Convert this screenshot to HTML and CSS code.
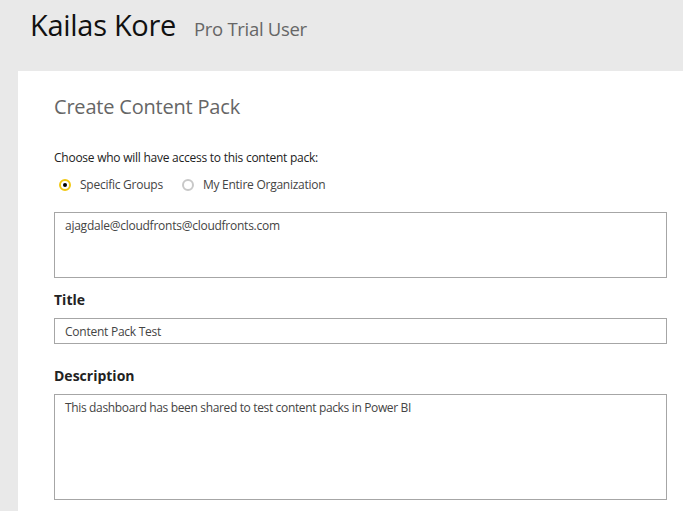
FILE: index.html
```html
<!DOCTYPE html>
<html lang="en">

<head>
    <meta charset="UTF-8">
    <meta name="viewport" content="width=device-width, initial-scale=1.0">
    <title>Create Content Pack</title>
    <link rel="stylesheet" href="styles.css">
</head>

<body>
    <header class="top-bar">
        <h1 class="user-name">Kailas Kore</h1>
        <span class="user-plan">Pro Trial User</span>
    </header>

    <main class="panel">
        <h2 class="panel-title">Create Content Pack</h2>

        <p class="access-label">Choose who will have access to this content pack:</p>
        <div class="radio-row">
            <label class="radio-option">
                <span class="radio checked"></span>
                Specific Groups
            </label>
            <label class="radio-option">
                <span class="radio"></span>
                My Entire Organization
            </label>
        </div>

        <div class="field-box email-box">ajagdale@cloudfronts@cloudfronts.com</div>

        <h3 class="field-label">Title</h3>
        <div class="field-box title-box">Content Pack Test</div>

        <h3 class="field-label desc-label">Description</h3>
        <div class="field-box desc-box">This dashboard has been shared to test content packs in Power BI</div>
    </main>
</body>

</html>
```

FILE: styles.css
```css
* {
    margin: 0;
    padding: 0;
    box-sizing: border-box;
}

body {
    font-family: "Open Sans", "Noto Sans", Arial, sans-serif;
    background-color: #e9e9e9;
    color: #222;
    height: 511px;
    overflow: hidden;
}

.top-bar {
    display: flex;
    align-items: baseline;
    padding: 5px 0 0 30px;
    height: 71px;
}

.user-name {
    font-size: 29px;
    font-weight: 400;
    color: #111;
    letter-spacing: -0.3px;
}

.user-plan {
    font-size: 18.5px;
    color: #666;
    margin-left: 18px;
    letter-spacing: -0.3px;
}

.panel {
    background-color: #fff;
    margin-left: 18px;
    padding: 22px 16px 0 36px;
    height: 440px;
}

.panel-title {
    font-size: 20px;
    font-weight: 400;
    color: #666;
    letter-spacing: -0.2px;
    margin-bottom: 29px;
}

.access-label {
    font-size: 12px;
    color: #222;
    letter-spacing: -0.25px;
}

.radio-row {
    display: flex;
    gap: 19px;
    margin: 10px 0 19px 5px;
    font-size: 12px;
    color: #444;
}

.radio-option {
    display: flex;
    align-items: center;
    gap: 9px;
    letter-spacing: -0.25px;
}

.radio {
    width: 12px;
    height: 12px;
    border-radius: 50%;
    border: 2px solid #c8c8c8;
    background-color: #fff;
    position: relative;
}

.radio.checked {
    border-color: #f2c811;
}

.radio.checked::after {
    content: "";
    position: absolute;
    left: 2px;
    top: 2px;
    width: 4px;
    height: 4px;
    border-radius: 50%;
    background-color: #000;
}

.field-box {
    border: 1px solid #a6a6a6;
    font-size: 12px;
    color: #444;
    padding: 5px 10px;
    letter-spacing: -0.25px;
}

.email-box {
    height: 66px;
    padding-top: 4px;
}

.title-box {
    height: 26px;
    line-height: 15px;
}

.desc-box {
    height: 106px;
    padding-top: 4px;
    letter-spacing: -0.35px;
}

.field-label {
    font-size: 14px;
    font-weight: 700;
    color: #222;
    margin: 12px 0 9px;
}

.desc-label {
    margin-top: 22px;
}
```
